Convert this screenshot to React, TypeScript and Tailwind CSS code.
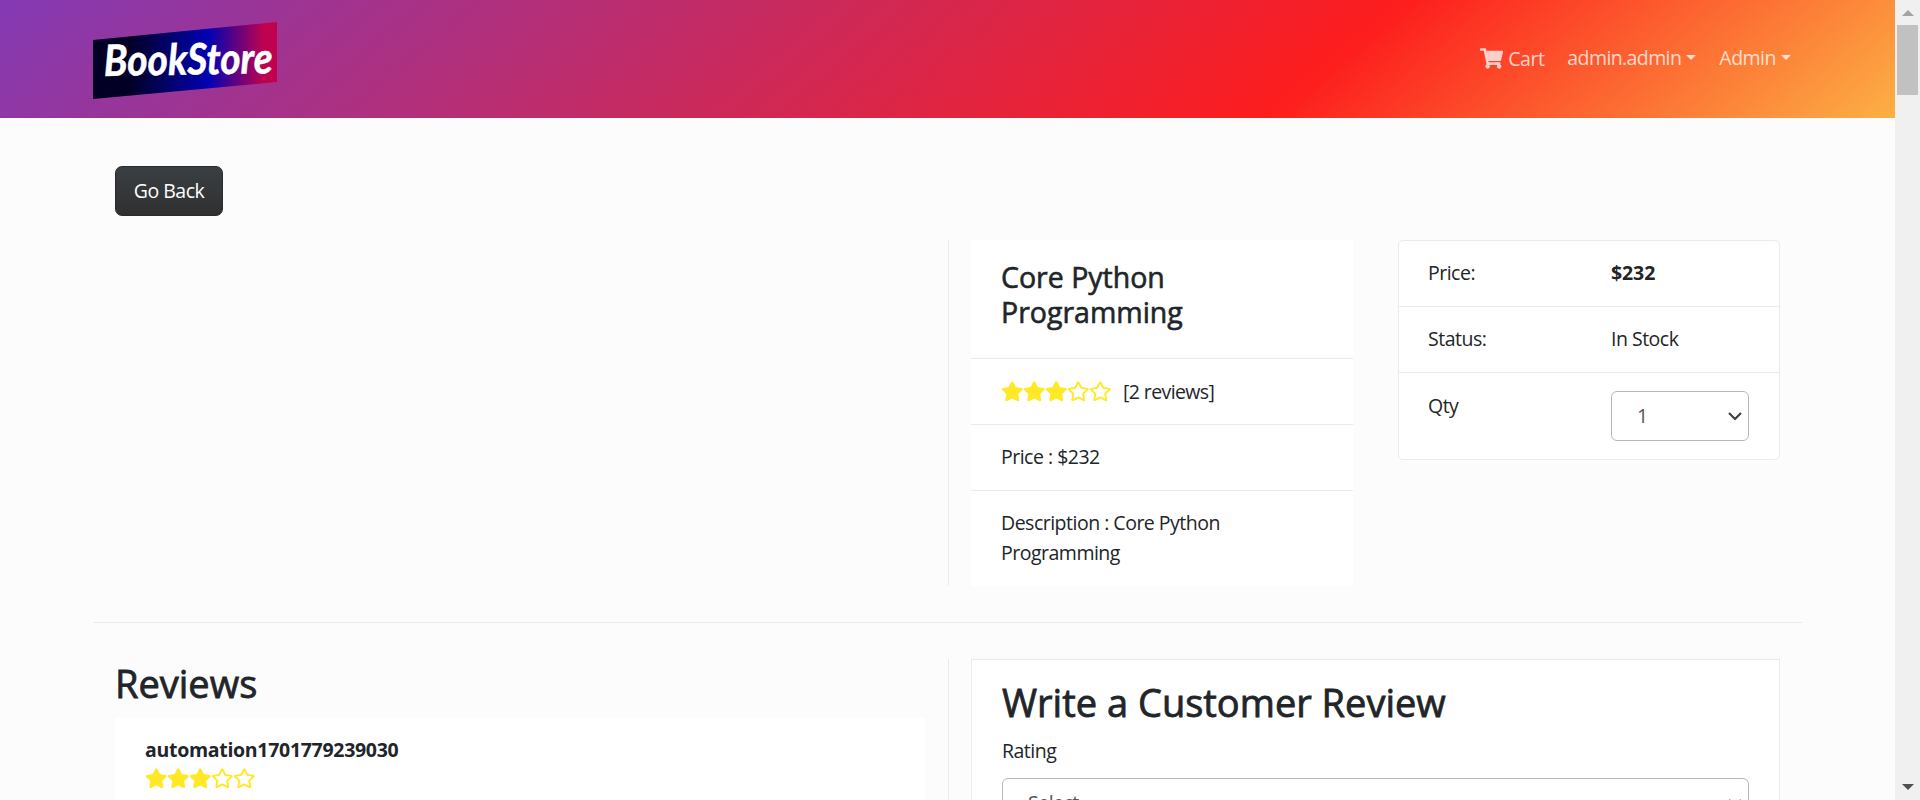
import { FaStar, FaRegStar, FaShoppingCart } from "react-icons/fa";

const line = "border-[#ebebeb]";

function Stars() {
  return (
    <span className="flex text-[#ffe825] text-[22.5px]">
      {[1, 2, 3, 4, 5].map((n) => (
        <span key={n} className="w-[22px]">
          {n <= 3 ? <FaStar /> : <FaRegStar />}
        </span>
      ))}
    </span>
  );
}

function Caret() {
  return <span className="ml-[5px] mb-[1px] h-0 w-0 border-x-[5px] border-t-[5px] border-x-transparent border-t-white/75" />;
}

function Chevron() {
  return (
    <svg width="14" height="9" viewBox="0 0 14 9" fill="none" stroke="#404040" strokeWidth="2.2">
      <path d="M1 1l6 6 6-6" />
    </svg>
  );
}

export default function App() {
  return (
    <div className="flex h-[800px] w-[1920px] overflow-hidden bg-[#fcfcfc] font-['Open_Sans',sans-serif] text-[19.5px] leading-[30px] tracking-[-0.5px] text-[#212529]">
      <div className="flex w-[1895px] flex-col">
        <header className="flex h-[118px] shrink-0 items-center justify-between bg-[linear-gradient(140deg,#833ab4_0%,#fd1d1d_69%,#fcb045_100%)] px-[93px]">
          <svg width="184" height="77" viewBox="0 0 184 77" className="mt-[3px]">
            <defs>
              <linearGradient id="logo">
                <stop offset="0.2" stopColor="#020024" />
                <stop offset="0.63" stopColor="#0202b4" />
                <stop offset="0.93" stopColor="#c0024e" />
              </linearGradient>
            </defs>
            <path d="M0 18L184 0V60L0 77Z" fill="url(#logo)" />
            <text x="11" y="54" textLength="169" lengthAdjust="spacingAndGlyphs" transform="rotate(-1 11 54)" className="fill-white stroke-white stroke-[0.6px] font-['Lato',sans-serif] text-[43px] font-bold tracking-normal italic">BookStore</text>
          </svg>
          <nav className="flex items-center gap-[23px] pr-[11px] pb-[3px] text-white/75">
            <a className="flex items-center"><FaShoppingCart className="mt-[2px] mr-[5px] text-[23px]" /><span className="pt-[2px]">Cart</span></a>
            <a className="flex items-center tracking-[-0.6px]">admin.admin<Caret /></a>
            <a className="flex items-center">Admin<Caret /></a>
          </nav>
        </header>
        <main className="flex flex-col px-[93px]">
          <div className="pt-[48px] pl-[22px]">
            <button className="block h-[50px] w-[108px] rounded-[7px] border border-[#292b2d] bg-linear-to-b from-[#3a3f43] to-[#303030] text-white">Go Back</button>
          </div>
          <section className="mt-[24px] flex h-[346px]">
            <div className={"w-[856px] border-r " + line} />
            <div className="ml-[22px] w-[382px] bg-white">
              <h3 className={"h-[119px] border-b px-[30px] pt-[20px] text-[28.5px] leading-[35px] tracking-[0px] [-webkit-text-stroke:0.6px_#212529] " + line}>Core Python Programming</h3>
              <div className={"flex h-[66px] items-center border-b px-[30px] " + line}><Stars /><span className="pl-[12px] tracking-[-0.6px]">[2 reviews]</span></div>
              <div className={"h-[66px] border-b px-[30px] pt-[17px] " + line}>Price : $232</div>
              <p className="px-[30px] pt-[17px]">Description : Core Python<br />Programming</p>
            </div>
            <div className={"ml-[45px] h-[220px] w-[382px] rounded-[5px] border bg-white " + line}>
              <div className={"flex h-[66px] border-b px-[29px] pt-[17px] " + line}><span className="w-[183px]">Price:</span><strong className="tracking-[-0.1px]">$232</strong></div>
              <div className={"flex h-[66px] border-b px-[29px] pt-[17px] " + line}><span className="w-[183px]">Status:</span><span>In Stock</span></div>
              <div className="flex px-[29px] pt-[18px]">
                <span className="w-[183px]">Qty</span>
                <div className="flex h-[50px] w-[138px] items-center justify-between rounded-[6px] border border-[#b8b8b8] pr-[6px] pl-[25px] text-[#555]"><span>1</span><Chevron /></div>
              </div>
            </div>
          </section>
          <hr className={"mt-[36px] border-t " + line} />
          <section className="mt-[36px] flex h-[141px]">
            <div className={"w-[856px] border-r pr-[23px] pl-[22px] " + line}>
              <h2 className="h-[59px] text-[38px] leading-[48px] tracking-[0px] [-webkit-text-stroke:0.8px_#212529]">Reviews</h2>
              <div className="h-[82px] bg-white px-[30px] pt-[17px]">
                <strong className="block h-[32px] leading-[30px] tracking-[-0.3px]">automation1701779239030</strong>
                <Stars />
              </div>
            </div>
            <div className={"ml-[22px] h-[300px] w-[809px] border bg-white px-[30px] pt-[18px] " + line}>
              <h2 className="text-[38px] leading-[48px] tracking-[0px] [-webkit-text-stroke:0.8px_#212529]">Write a Customer Review</h2>
              <div className="mt-[10px]">Rating</div>
              <div className="mt-[12px] flex h-[50px] items-center justify-between rounded-[6px] border border-[#b8b8b8] pr-[6px] pl-[25px] text-[#555]"><span>Select...</span><Chevron /></div>
            </div>
          </section>
        </main>
      </div>
      <aside className="flex w-[25px] flex-col items-center bg-[#f0f0f0]">
        <span className="mt-[10px] h-0 w-0 border-x-[6px] border-b-[6px] border-x-transparent border-b-[#a3a3a3]" />
        <span className="mt-[9px] h-[70px] w-[21px] bg-[#c1c1c1]" />
        <span className="mt-auto mb-[10px] h-0 w-0 border-x-[6px] border-t-[6px] border-x-transparent border-t-[#505050]" />
      </aside>
    </div>
  );
}
